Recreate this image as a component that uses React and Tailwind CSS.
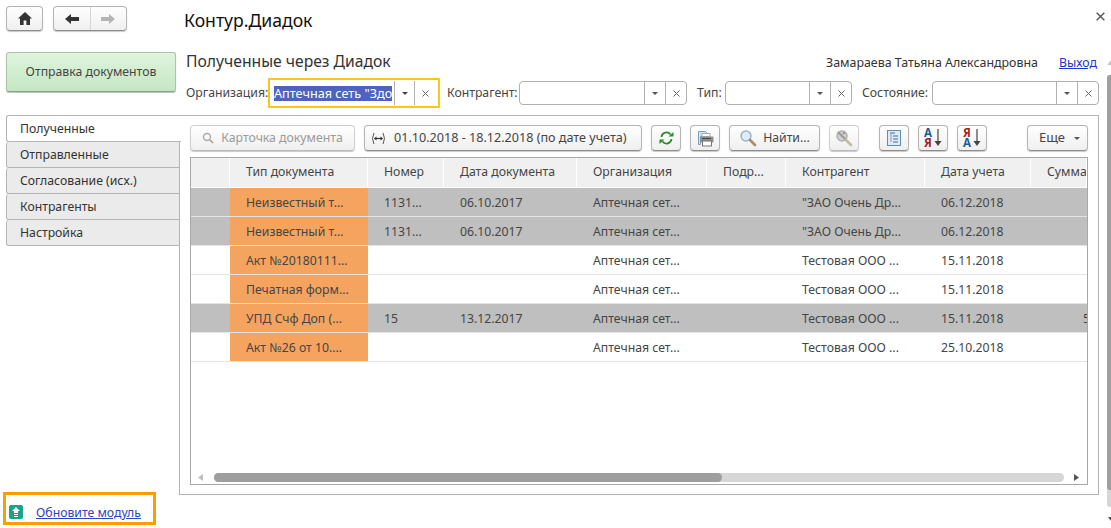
const btn = 'flex items-center justify-center rounded-[4px] border border-[#b4b4b4] border-b-[#8e8e8e] bg-linear-to-b from-white to-[#efefef] shadow-[0_1px_1px_#c8c8c8]'

const columns = [
  { title: '', },
  { title: 'Тип документа' },
  { title: 'Номер' },
  { title: 'Дата документа' },
  { title: 'Организация' },
  { title: 'Подр...' },
  { title: 'Контрагент' },
  { title: 'Дата учета' },
  { title: 'Сумма' },
]

const rows = [
  { gray: true, cells: ['Неизвестный т...', '1131...', '06.10.2017', 'Аптечная сет...', '', '"ЗАО Очень Др...', '06.12.2018', ''] },
  { gray: true, cells: ['Неизвестный т...', '1131...', '06.10.2017', 'Аптечная сет...', '', '"ЗАО Очень Др...', '06.12.2018', ''] },
  { gray: false, cells: ['Акт №20180111...', '', '', 'Аптечная сет...', '', 'Тестовая ООО ...', '15.11.2018', ''] },
  { gray: false, cells: ['Печатная форм...', '', '', 'Аптечная сет...', '', 'Тестовая ООО ...', '15.11.2018', ''] },
  { gray: true, cells: ['УПД Счф Доп (...', '15', '13.12.2017', 'Аптечная сет...', '', 'Тестовая ООО ...', '15.11.2018', '5'] },
  { gray: false, cells: ['Акт №26 от 10....', '', '', 'Аптечная сет...', '', 'Тестовая ООО ...', '25.10.2018', ''] },
]

const tabs = ['Отправленные', 'Согласование (исх.)', 'Контрагенты', 'Настройка']

const Caret = ({ color = '#555' }) => (
  <svg width="6" height="3" viewBox="0 0 6 3"><path d="M0 0h6L3 3z" fill={color} /></svg>
)

const Cross = ({ size = 7, color = '#666', width = 1 }) => (
  <svg width={size} height={size} viewBox="0 0 7 7"><path d="M.5.5l6 6M6.5.5l-6 6" stroke={color} strokeWidth={width} fill="none" /></svg>
)

const Field = ({ label, wrap }) => (
  <div className="flex items-center">
    <span className={label.cls}>{label.text}</span>
    <div className={`flex h-[24px] rounded-[4px] border border-[#b0b0b0] bg-white ${wrap}`}>
      <div className="flex-1" />
      <div className="flex w-[21px] items-center justify-center border-l border-[#b0b0b0]"><Caret /></div>
      <div className="flex w-[21px] items-center justify-center border-l border-[#b0b0b0]"><Cross /></div>
    </div>
  </div>
)

const Lens = ({ gray }) => (
  <svg width="18" height="18" viewBox="0 0 18 18">
    <circle cx="7" cy="7" r="5" fill={gray ? '#d0d0d0' : '#dcecf8'} stroke={gray ? '#b0b0b0' : '#9fb4c4'} strokeWidth="1.5" />
    <path d="M11 11l5 5" stroke={gray ? '#c4b8a8' : '#b08a60'} strokeWidth="2.6" strokeLinecap="round" />
    {gray && <path d="M3 3l7 7M10 3l-2 2" stroke="#9a9a9a" strokeWidth="2" />}
  </svg>
)

const SortIcon = ({ top, bottom, topColor, bottomColor }) => (
  <div className="relative h-[20px] w-[20px]">
    <span className={`absolute left-[1px] top-[0px] text-[11.5px] leading-[10px] font-bold [font-family:'Liberation_Serif',serif] ${topColor}`}>{top}</span>
    <span className={`absolute left-[1px] top-[10px] text-[11.5px] leading-[10px] font-bold [font-family:'Liberation_Serif',serif] ${bottomColor}`}>{bottom}</span>
    <svg className="absolute left-[11px] top-[1px]" width="8" height="18" viewBox="0 0 8 18">
      <path d="M4 0v14" stroke="#444" strokeWidth="1.2" />
      <path d="M0.5 12h7L4 17z" fill="#444" />
    </svg>
  </div>
)

export default function App() {
  return (
    <div className="relative h-[528px] w-[1111px] overflow-hidden bg-white text-[12.25px] text-[#454545] [font-family:'Liberation_Sans',sans-serif]">
      {/* верхняя панель */}
      <div className={`${btn} absolute left-[6px] top-[6px] h-[25px] w-[37px]`}>
        <svg width="14" height="13" viewBox="0 0 14 13">
          <path d="M7 0L0 6.5h2V13h3.6V8.5h2.8V13H12V6.5h2z" fill="#333" />
        </svg>
      </div>
      <div className={`${btn} absolute left-[53px] top-[6px] h-[25px] w-[74px]`}>
        <div className="flex h-full flex-1 items-center justify-center border-r border-[#d4d4d4]">
          <svg width="14" height="10" viewBox="0 0 14 10"><path d="M0 5l6-5v3h8v4H6v3z" fill="#333" /></svg>
        </div>
        <div className="flex h-full flex-1 items-center justify-center">
          <svg width="14" height="10" viewBox="0 0 14 10"><path d="M14 5L8 0v3H0v4h8v3z" fill="#b4b4b4" /></svg>
        </div>
      </div>
      <div className="absolute left-[184px] top-[9px] text-[17.6px] leading-[22px] text-[#111]">Контур.Диадок</div>
      <div className="absolute left-[1096px] top-[12px]"><Cross size={9} color="#555" width={1.1} /></div>

      {/* левая колонка */}
      <div className="absolute left-[6px] top-[52px] flex h-[40px] w-[170px] items-center justify-center rounded-[3px] border border-[#a9c4a9] border-b-[#86a086] bg-linear-to-b from-[#dff5de] to-[#c4e6c3] shadow-[0_1px_1px_#c0c0c0]">
        Отправка документов
      </div>

      <div className="absolute left-[186px] top-[51px] text-[15.7px] leading-[21px] text-[#333]">Полученные через Диадок</div>
      <div className="absolute left-[826px] top-[54px] text-[12.4px] text-[#333]">Замараева Татьяна Александровна</div>
      <div className="absolute left-[1059px] top-[54px] text-[#1a35c9] underline">Выход</div>

      {/* отборы */}
      <div className="absolute left-[186px] top-[85px] leading-[16px]">Организация:</div>
      <div className="absolute left-[268px] top-[78px] flex h-[30px] w-[172px] items-center rounded-[1px] border-2 border-[#fbc51e] bg-white">
        <div className="ml-[4px] w-[118px] overflow-hidden whitespace-nowrap bg-[#4c64bc] text-[12.7px] leading-[15px] text-white">Аптечная сеть "Здо</div>
        <div className="ml-[2px] flex h-[24px] w-[21px] items-center justify-center border-x border-[#b0b0b0]"><Caret color="#444" /></div>
        <div className="flex h-[24px] w-[21px] items-center justify-center"><Cross /></div>
      </div>
      <div className="absolute left-[447px] top-[81px]">
        <Field label={{ text: 'Контрагент:', cls: 'w-[72px]' }} wrap="w-[168px]" />
      </div>
      <div className="absolute left-[697px] top-[81px]">
        <Field label={{ text: 'Тип:', cls: 'w-[28px]' }} wrap="w-[127px]" />
      </div>
      <div className="absolute left-[862px] top-[81px]">
        <Field label={{ text: 'Состояние:', cls: 'w-[70px]' }} wrap="w-[167px]" />
      </div>

      {/* основная панель */}
      <div className="absolute left-[179px] top-[115px] h-[380px] w-[920px] border border-[#b4b4b4] bg-white" />

      {/* разделы */}
      <div className="absolute left-[6px] top-[115px] flex w-[174px] flex-col">
        <div className="h-[27px] w-[175px] rounded-l-[3px] border border-r-0 border-[#b4b4b4] bg-white pl-[13px] leading-[25px] text-[#333]">Полученные</div>
        {tabs.map((t) => (
          <div key={t} className="h-[26px] rounded-l-[3px] border border-t-0 border-[#b4b4b4] bg-[#ebebeb] pl-[13px] leading-[25px] text-[#333]">{t}</div>
        ))}
      </div>

      <div className="absolute left-[190px] top-[125px] flex h-[26px] items-stretch gap-[9px]">
        <div className={`${btn} w-[165px] gap-[7px] border-[#d0d0d0] border-b-[#bcbcbc] text-[#9a9a9a]`}>
          <svg width="12" height="12" viewBox="0 0 12 12">
            <circle cx="5" cy="5" r="3.500" fill="none" stroke="#aaa" strokeWidth="1.400" />
            <path d="M8 8l3 3" stroke="#b09a80" strokeWidth="1.600" />
          </svg>
          Карточка документа
        </div>
        <div className={`${btn} w-[278px] justify-start gap-[8px] pl-[6px] text-[12.6px]`}>
          <svg width="15" height="13" viewBox="0 0 15 13">
            <path d="M3 1Q0 6.500 3 12M12 1Q15 6.500 12 12" fill="none" stroke="#555" strokeWidth="1" />
            <path d="M3.500 6.500h8" stroke="#333" strokeWidth="1.200" />
            <path d="M3 6.500l2.500-2v4zM12 6.500l-2.500-2v4z" fill="#333" />
          </svg>
          01.10.2018 - 18.12.2018 (по дате учета)
        </div>
        <div className={`${btn} w-[30px]`}>
          <svg width="15" height="14" viewBox="0 0 15 14">
            <path d="M2.500 6A5 5 0 0 1 11.500 3.500" fill="none" stroke="#2f8a2f" strokeWidth="1.800" />
            <path d="M9.500 5.500h5V1z" fill="#2f8a2f" />
            <path d="M12.500 8A5 5 0 0 1 3.500 10.500" fill="none" stroke="#2f8a2f" strokeWidth="1.800" />
            <path d="M5.500 8.500h-5V13z" fill="#2f8a2f" />
          </svg>
        </div>
        <div className={`${btn} w-[30px]`}>
          <svg width="17" height="17" viewBox="0 0 17 17">
            <path d="M1.500 1.500h7l2 2v3h-7v8h-2z" fill="#d5e3f0" stroke="#7f9fbc" />
            <rect x="5" y="3.500" width="8" height="3" fill="#fff" stroke="#aaa" />
            <rect x="3.500" y="6.500" width="13" height="6" rx="1" fill="#8f8f8f" />
            <rect x="5.500" y="11" width="9" height="5" fill="#fff" stroke="#777" />
            <path d="M5 8.500h9" stroke="#444" />
          </svg>
        </div>
        <div className={`${btn} w-[91px] gap-[6px]`}>
          <Lens />
          Найти...
        </div>
        <div className={`${btn} w-[30px] border-[#d0d0d0] border-b-[#bcbcbc]`}><Lens gray /></div>
        <div className={`${btn} ml-[11px] w-[30px]`}>
          <svg width="14" height="16" viewBox="0 0 14 16">
            <rect x=".5" y=".5" width="13" height="15" fill="#dcebf6" stroke="#5f8db0" />
            <path d="M3 3h5M6 6h5M6 9h5M6 12h5" stroke="#48708f" strokeWidth="1.200" />
            <path d="M4 4v8" stroke="#8888aa" strokeWidth=".8" />
          </svg>
        </div>
        <div className={`${btn} w-[30px]`}>
          <SortIcon top="А" bottom="Я" topColor="text-[#1d5f93]" bottomColor="text-[#a11b1b]" />
        </div>
        <div className={`${btn} w-[30px]`}>
          <SortIcon top="Я" bottom="А" topColor="text-[#a11b1b]" bottomColor="text-[#1d5f93]" />
        </div>
        <div className={`${btn} ml-[31px] w-[61px] gap-[9px] pl-[4px] text-[13px]`}>
          Еще
          <Caret />
        </div>
      </div>

      {/* таблица */}
      <div className="absolute left-[190px] top-[157px] h-[328px] w-[898px] overflow-hidden border border-[#a8a8a8] bg-white">
        <div className="grid h-[30px] grid-cols-[39px_138px_76px_133px_130px_79px_139px_106px_56px] border-b border-white bg-[#f0f0f0]">
          {columns.map((c, i) => (
            <div key={i} className="overflow-hidden whitespace-nowrap border-r border-white pl-4 leading-[27px]">{c.title}</div>
          ))}
        </div>
        {rows.map((r, i) => (
          <div
            key={i}
            className={`grid h-[29px] grid-cols-[39px_138px_76px_133px_130px_79px_139px_106px_56px] border-b border-[#e4e4e4] ${r.gray ? 'bg-[#bfbfbf]' : 'bg-white'}`}
          >
            <div />
            {r.cells.map((c, j) => (
              <div
                key={j}
                className={`overflow-hidden whitespace-nowrap leading-[30px] ${j === 0 ? 'bg-[#f5a460] pl-4' : j === 7 ? 'pl-[52px]' : 'pl-4'}`}
              >
                {c}
              </div>
            ))}
          </div>
        ))}
        <div className="absolute left-[7px] top-[316px]">
          <svg width="5" height="7" viewBox="0 0 5 7"><path d="M5 0v7L0 3.500z" fill="#bdbdbd" /></svg>
        </div>
        <div className="absolute left-[23px] top-[315px] h-[9px] w-[850px] rounded-full bg-[#d6d6d6]">
          <div className="h-full w-[508px] rounded-full bg-[#9e9e9e]" />
        </div>
        <div className="absolute left-[883px] top-[316px]">
          <svg width="5" height="7" viewBox="0 0 5 7"><path d="M0 0v7l5-3.500z" fill="#555" /></svg>
        </div>
      </div>

      {/* вертикальная прокрутка */}
      <div className="absolute left-[1107px] top-[60px]">
        <svg width="4" height="5" viewBox="0 0 4 5"><path d="M4 0v5H0z" fill="#c8c8c8" /></svg>
      </div>
      <div className="absolute left-[1107px] top-[75px] h-[432px] w-[4px] rounded-l-[3px] bg-[#d6d6d6]">
        <div className="h-[415px] rounded-l-[3px] bg-[#9e9e9e]" />
      </div>
      <div className="absolute left-[1108px] top-[517px]">
        <svg width="3" height="4" viewBox="0 0 3 4"><path d="M0 0h3v4z" fill="#555" /></svg>
      </div>

      {/* подсказка об обновлении */}
      <div className="absolute left-[3px] top-[492px] flex h-[33px] w-[153px] items-center border-[3px] border-[#ff9c00] pl-[3px]">
        <div className="mt-[7px] flex h-[14px] w-[14px] items-center justify-center rounded-[2px] bg-[#17a589]">
          <svg width="10" height="11" viewBox="0 0 10 11">
            <path d="M5 0l4 4H7v2H3V4H1z" fill="#fff" />
            <path d="M3 7.500h4M3 9.500h4" stroke="#fff" strokeWidth="1" />
          </svg>
        </div>
        <a className="ml-[13px] mt-[9px] text-[#2b45c4] underline">Обновите модуль</a>
      </div>
    </div>
  )
}
